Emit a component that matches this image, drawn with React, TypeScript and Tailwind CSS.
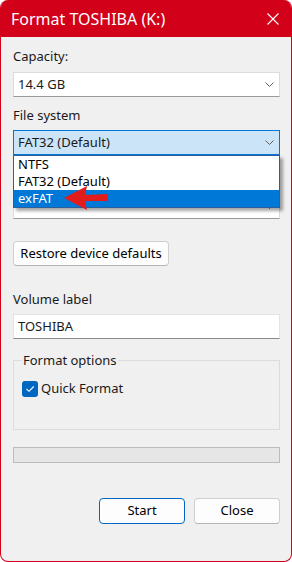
import React from "react";

function Chevron() {
  return (
    <svg width="9" height="5" viewBox="0 0 9 5" className="shrink-0">
      <path d="M0.5 0.5 L4.5 4.5 L8.5 0.5" fill="none" stroke="#5f5f5f" strokeWidth="1" />
    </svg>
  );
}

function Combo({ value, active = false }: { value: string; active?: boolean }) {
  return (
    <div
      className={
        active
          ? "flex h-[25px] items-center justify-between border border-[#0078d7] bg-[#cce4f7] pl-[4px] pr-[5px]"
          : "flex h-[25px] items-center justify-between border border-[#dcdcdc] border-b-[#9a9a9a] bg-white pl-[4px] pr-[5px]"
      }
    >
      <span>{value}</span>
      <Chevron />
    </div>
  );
}

function Label({ children, className = "" }: { children: React.ReactNode; className?: string }) {
  return <div className={"h-[16px] leading-[16px] " + className}>{children}</div>;
}

export default function App() {
  const options = ["NTFS", "FAT32 (Default)", "exFAT"];
  return (
    <div className="h-[562px] w-[292px] bg-white font-['Noto_Sans',sans-serif] text-[13px] text-[#1a1a1a]">
      <div className="flex h-full flex-col overflow-hidden rounded-[8px] border-x border-b border-[#d20019] bg-[#f0f0f0]">
        {/* title bar */}
        <div className="-mx-px flex h-[37px] shrink-0 items-center justify-between bg-[#d20019] pl-[11px] pr-[13px]">
          <span className="text-[16px] text-white">Format TOSHIBA (K:)</span>
          <svg width="12" height="12" viewBox="0 0 12 12">
            <path d="M0.5 0.5 L11.5 11.5 M11.5 0.5 L0.5 11.5" stroke="white" strokeWidth="1.1" />
          </svg>
        </div>

        <div className="relative flex flex-1 flex-col pl-[12px] pr-[11px] pt-[11px]">
          <Label>Capacity:</Label>
          <div className="mt-[8px]">
            <Combo value="14.4 GB" />
          </div>

          <Label className="mt-[10px]">File system</Label>
          <div className="relative mt-[7px]">
            <Combo value="FAT32 (Default)" active />
            {/* open dropdown list, covers the allocation unit size field */}
            <div className="absolute left-0 right-0 top-[25px] z-10 border border-[#2b5f9e] bg-white shadow-[3px_3px_3px_rgba(0,0,0,0.35)]">
              {options.map((o, i) => (
                <div
                  key={o}
                  className={
                    i === 2
                      ? "h-[17px] bg-[#0078d7] pl-[4px] leading-[17px] text-white"
                      : "h-[17px] pl-[4px] leading-[17px] text-black"
                  }
                >
                  {o}
                </div>
              ))}
            </div>
          </div>

          <div className="mt-[39px]">
            <Combo value="" />
          </div>

          <button className="mt-[22px] h-[25px] w-[156px] rounded-[4px] border border-[#d0d0d0] border-b-[#b5b5b5] bg-[#fdfdfd] text-black">
            Restore device defaults
          </button>

          <Label className="mt-[25px]">Volume label</Label>
          <div className="mt-[7px] flex h-[25px] items-center border border-[#e3e3e3] border-b-[#8a8a8a] bg-white pl-[4px]">
            TOSHIBA
          </div>

          <fieldset className="mt-[13px] border border-[#dcdcdc] pb-[30px]">
            <legend className="ml-[8px] px-[1px] leading-[16px]">Format options</legend>
            <div className="mt-[11px] flex items-center gap-[3px] pl-[8px]">
              <span className="flex h-[16px] w-[16px] items-center justify-center rounded-[3px] bg-[#0067c0]">
                <svg width="10" height="8" viewBox="0 0 10 8">
                  <path d="M1.5 4 L4 6.3 L8.7 1.5" fill="none" stroke="white" strokeWidth="1.1" />
                </svg>
              </span>
              <span>Quick Format</span>
            </div>
          </fieldset>

          <div className="mt-[17px] h-[16px] border border-[#bcbcbc] bg-[#e6e6e6]" />

          <div className="mt-[35px] flex justify-end gap-[9px]">
            <button className="h-[26px] w-[86px] rounded-[4px] border border-[#0067c0] bg-[#fdfdfd] text-black">
              Start
            </button>
            <button className="h-[26px] w-[86px] rounded-[4px] border border-[#d0d0d0] border-b-[#b5b5b5] bg-[#fdfdfd] text-black">
              Close
            </button>
          </div>

          {/* red annotation arrow */}
          <svg
            className="pointer-events-none absolute left-[62px] top-[148px] z-20"
            width="48"
            height="28"
            viewBox="0 0 48 28"
          >
            <polygon points="1,13 24,1 22,10 45,9 45,16 22,16 24,25" fill="#e21b1b" />
          </svg>
        </div>
      </div>
    </div>
  );
}
